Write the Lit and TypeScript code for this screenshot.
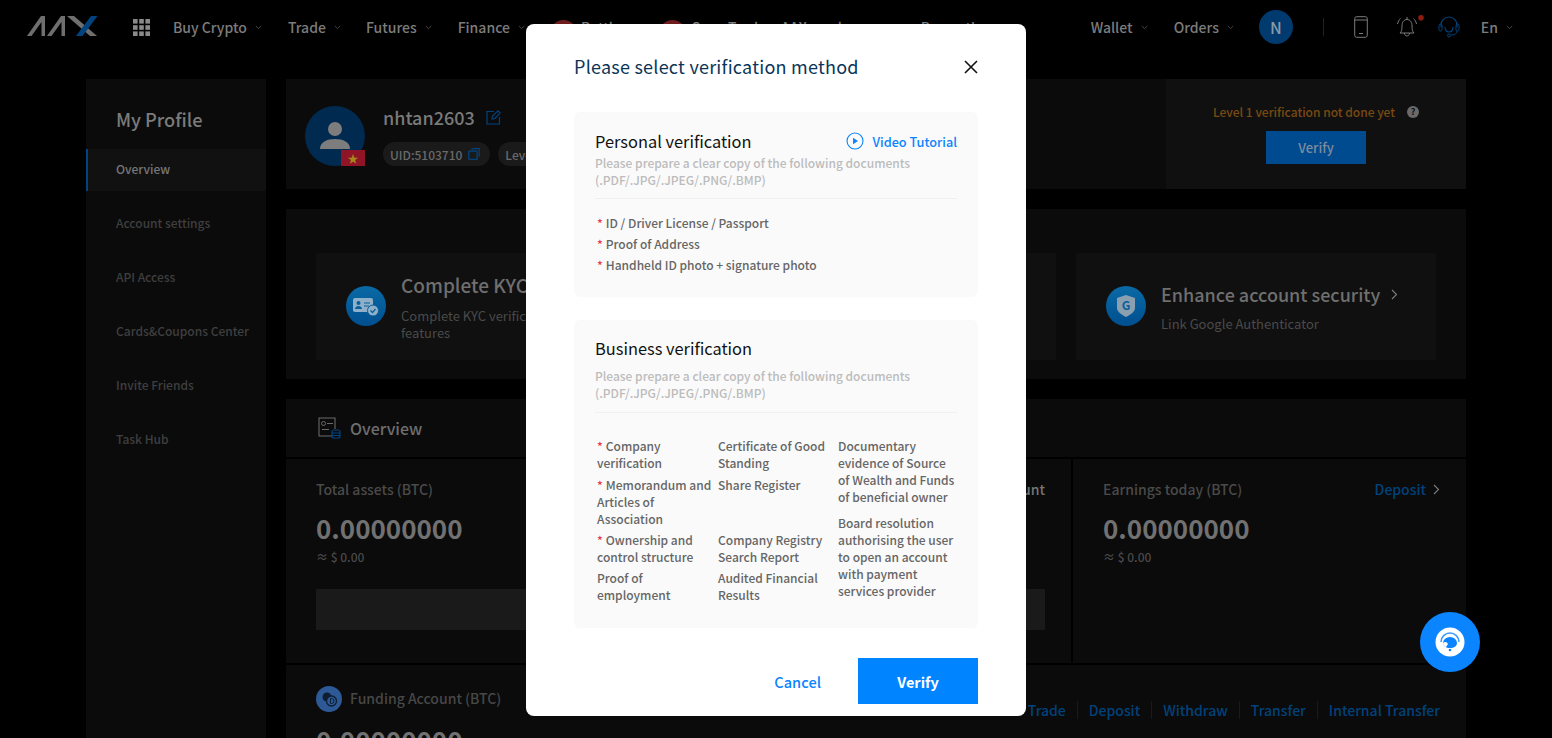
import { LitElement, html, css, svg } from "lit";
import { customElement } from "lit/decorators.js";

const chev = html`<svg class="chev" width="7" height="5" viewBox="0 0 7 5"><path d="M.8 1l2.7 2.6L6.2 1" fill="none" stroke="#444" stroke-width="1"/></svg>`;
const right = html`<svg class="right" width="7" height="11" viewBox="0 0 7 11"><path d="M1 1l4.500 4.500L1 10" fill="none" stroke="#7d7d7d" stroke-width="1.100"/></svg>`;
const grid = [0, 1, 2].flatMap((r) => [0, 1, 2].map((c) => svg`<rect x=${c * 6.2} y=${r * 6.2} width="4.6" height="4.6" fill="#8a8a8a"/>`));

@customElement("app-root")
export class AppRoot extends LitElement {
  static styles = css`
    :host { display: block; width: 1552px; height: 738px; overflow: hidden; position: relative; background: #000; font-family: "Noto Sans CJK SC", "Noto Sans", sans-serif; color: #7a7a7a; }
    svg { display: block; flex: none; }
    .head { height: 56px; display: flex; align-items: center; padding: 0 0 2px 26px; box-sizing: border-box; font-size: 14px; font-weight: 500; color: #7c7c7c; }
    .logo { margin: 0 35px 3px 0; }
    .gridi { margin-right: 23px; }
    .nav { display: flex; align-items: center; gap: 8px; margin-right: 26px; white-space: nowrap; flex: none; }
    .n-trade { margin-right: 25px; }
    .n-fin { margin-right: 26px; }
    .pill { width: 25px; height: 14px; border-radius: 12px 12px 0 0; background: #6e1c1c; margin-right: 5px; flex: none; }
    .n-battle { margin-right: 39px; }
    .n-copy { margin-left: 1px; margin-right: 15px; }
    .n-aax { margin-right: 50px; }
    .spacer { flex: 1; }
    .n-orders { margin-right: 0; }
    .n-en { margin-right: 39px; }
    .user { width: 34px; height: 34px; border-radius: 50%; background: #003a6e; color: #8a98a6; display: flex; align-items: center; justify-content: center; font-size: 16px; margin: 0 30px 0 25px; flex: none; }
    .vsep { width: 1px; height: 18px; background: #222; margin-right: 30px; flex: none; }
    .phone { margin-right: 26px; }
    .bell { margin-right: 14px; }
    .headset { margin-right: 21px; }
    .main { display: flex; gap: 20px; padding: 23px 86px 0; align-items: flex-start; }
    .side { width: 180px; height: 660px; background: #0b0b0b; flex: none; }
    .side h2 { margin: 0; padding: 25px 30px 15px; font-size: 18.200px; line-height: 30px; font-weight: 500; color: #7b7b7b; }
    .side .it { height: 42px; margin-bottom: 12px; padding: 0 0 4px 30px; box-sizing: border-box; display: flex; align-items: center; font-size: 12px; font-weight: 500; color: #3f3f3f; }
    .side .it.on { background: #111; color: #777; border-left: 2px solid #00437f; padding-left: 28px; }
    .content { flex: 1; display: flex; flex-direction: column; gap: 20px; min-width: 0; }
    .panel { background: #0b0b0b; }
    .prof { height: 110px; display: flex; }
    .who { flex: 1; display: flex; padding: 27px 0 0 19px; }
    .ava { width: 60px; height: 60px; border-radius: 50%; background: #002a50; position: relative; display: flex; align-items: center; justify-content: center; margin-right: 18px; }
    .flag { position: absolute; right: 0; bottom: 0; width: 24px; height: 16px; background: #8f1526; display: flex; align-items: center; justify-content: center; color: #a8871a; font-size: 11px; line-height: 16px; }
    .nm { font-size: 18px; line-height: 22px; font-weight: 500; color: #7a7a7a; display: flex; align-items: center; gap: 11px; }
    .tags { display: flex; gap: 8px; margin-top: 14px; }
    .tag { height: 24px; padding: 0 7px; border-radius: 12px; background: #1a1a1a; display: flex; align-items: center; gap: 6px; font-size: 12px; font-weight: 500; color: #6a6a6a; }
    .tag.uid { padding-right: 10px; }
    .lv { width: 300px; background: #101010; flex: none; display: flex; flex-direction: column; align-items: center; padding-top: 23px; box-sizing: border-box; }
    .warn { font-size: 12px; font-weight: 500; line-height: 20px; color: #7a4a12; display: flex; align-items: center; gap: 12px; height: 20px; }
    .q { width: 12px; height: 12px; border-radius: 50%; background: #6a6a6a; color: #111; font-size: 9px; font-weight: 700; line-height: 12px; text-align: center; }
    .btn { width: 100px; height: 33px; background: #004a8f; margin-top: 9px; display: flex; align-items: center; justify-content: center; font-size: 13px; font-weight: 500; color: #7d8d9d; }
    .tasks { height: 170px; padding: 44px 30px 19px; box-sizing: border-box; display: flex; gap: 20px; }
    .task { flex: 1 1 0; min-width: 0; background: #101010; display: flex; align-items: flex-start; padding: 0 30px; box-sizing: border-box; }
    .tic { width: 40px; height: 40px; border-radius: 50%; background: linear-gradient(#0a6aa6, #004f8f); margin: 33px 15px 0 0; display: flex; align-items: center; justify-content: center; flex: none; }
    .task h3 { margin: 0; font-size: 18px; line-height: 28px; font-weight: 500; color: #6f6f6f; white-space: nowrap; display: flex; align-items: center; gap: 11px; }
    .task p { margin: 0; font-size: 13px; line-height: 17px; color: #4a4a4a; }
    .t1 h3 { margin-top: 18px; font-size: 19px; } .t1 p { margin-top: 8px; }
    .t3 h3 { margin-top: 27px; } .t3 p { margin-top: 7px; }
    .ov { display: flex; flex-direction: column; gap: 2px; background: #000; }
    .ovh { height: 58px; background: #0b0b0b; display: flex; align-items: center; padding-left: 32px; gap: 9px; font-size: 16px; font-weight: 500; color: #6e6e6e; }
    .stats { height: 204px; display: flex; gap: 2px; }
    .st { background: #0b0b0b; padding: 18px 30px; box-sizing: border-box; position: relative; }
    .st.a { width: 785px; }
    .st.b { flex: 1; }
    .lbl { font-size: 14px; font-weight: 500; line-height: 24px; color: #4a4a4a; }
    .val { font-size: 26px; line-height: 34px; margin-top: 10px; font-weight: 700; color: #717171; }
    .apx { font-size: 12px; line-height: 18px; color: #4a4a4a; margin-top: 3px; font-weight: 500; }
    .bar { width: 729px; height: 41px; background: #1a1a1a; margin-top: 23px; }
    .acct { position: absolute; right: 26px; top: 18px; font-size: 14px; line-height: 24px; font-weight: 500; color: #757575; }
    .dep { position: absolute; right: 26px; top: 18px; display: flex; align-items: center; gap: 7px; font-size: 14px; font-weight: 500; line-height: 24px; color: #00427c; }
    .fund { height: 73px; background: #0b0b0b; padding: 23px 26px 0 30px; box-sizing: border-box; display: flex; align-items: flex-start; gap: 8px; font-size: 14px; font-weight: 500; color: #474747; position: relative; }
    .fund .ic { width: 26px; height: 26px; border-radius: 50%; background: #2d5a96; display: flex; align-items: center; justify-content: center; margin-top: -2px; }
    .links { margin: 10px 0 0 auto; display: flex; align-items: center; color: #00427c; font-weight: 500; height: 24px; }
    .links span { padding: 0 11px; border-left: 1px solid #1a1a1a; line-height: 18px; }
    .links span:first-child { border: 0; }
    .links span:last-child { padding-right: 0; }
    .fv { position: absolute; left: 30px; top: 58px; font-size: 26px; line-height: 34px; font-weight: 700; color: #717171; }
    .modal { position: absolute; left: 526px; top: 24px; width: 500px; height: 692px; background: #fff; border-radius: 8px; padding: 0 48px; box-sizing: border-box; display: flex; flex-direction: column; }
    .mh { height: 84px; margin-bottom: 4px; display: flex; align-items: center; justify-content: space-between; font-size: 18px; color: #0a3558; flex: none; }
    .mh span { letter-spacing: .24px; }
    .mh svg { margin-top: 2px; }
    .box { background: #fafafa; border-radius: 6px; padding: 0 21px; flex: none; }
    .box h4 { margin: 0; font-size: 16.400px; font-weight: 400; line-height: 24px; color: #111; }
    .b1 { height: 185px; padding-top: 17px; box-sizing: border-box; margin-bottom: 23px; }
    .b1 .hint { margin-top: 1px; }
    .b2 { height: 308px; padding-top: 16px; box-sizing: border-box; }
    .row1 { display: flex; justify-content: space-between; align-items: center; }
    .vt { display: flex; align-items: center; gap: 8px; color: #0a84ff; font-size: 12.700px; font-weight: 500; }
    .hint { font-size: 12px; font-weight: 500; line-height: 17px; color: #bcbcbc; padding-bottom: 10px; border-bottom: 1px solid #f0f0f0; }
    .b2 .hint { margin-top: 7px; padding-bottom: 11px; }
    .list { margin-top: 13px; padding-left: 2px; font-size: 12px; font-weight: 500; line-height: 21px; color: #666; }
    i { color: #e5394d; font-style: normal; margin-right: 3px; }
    .cols { display: grid; grid-template-columns: 121px 120px 1fr; margin: 24px 0 0 2px; font-size: 12px; font-weight: 500; line-height: 17px; color: #666; }
    .col { display: flex; flex-direction: column; }
    .mf { display: flex; justify-content: flex-end; align-items: center; margin-top: 30px; flex: none; }
    .cancel { color: #0a84ff; font-size: 14.600px; font-weight: 500; margin-right: 37px; }
    .ok { width: 120px; height: 46px; background: #0084ff; color: #fff; font-size: 14.500px; font-weight: 700; display: flex; align-items: center; justify-content: center; }
    .fab { position: absolute; left: 1420px; top: 612px; width: 60px; height: 60px; border-radius: 50%; background: #0a84ff; display: flex; align-items: center; justify-content: center; }
  `;

  render() {
    return html`
      <div class="head">
        <svg class="logo" width="72" height="20" viewBox="0 0 72 20">
          <path d="M1 20L15 0h4v20h-3.500V6L5.500 20z" fill="#6f6f6f"/>
          <path d="M21 20L35 0h4v20h-3.500V6L25.500 20z" fill="#6f6f6f"/>
          <path d="M41 0h7l23 20h-7z" fill="#6f6f6f"/>
          <path d="M71.500 0H65L50 20h6.500z" fill="#00437f"/>
        </svg>
        <svg class="gridi" width="17" height="17" viewBox="0 0 17 17">${grid}</svg>
        <div class="nav">Buy Crypto ${chev}</div>
        <div class="nav n-trade">Trade ${chev}</div>
        <div class="nav">Futures ${chev}</div>
        <div class="nav n-fin">Finance ${chev}</div>
        <div class="pill"></div><div class="nav n-battle">Battle</div>
        <div class="pill"></div><div class="nav n-copy">Copy Trade</div>
        <div class="nav n-aax">AAX academy</div>
        <div class="nav">Promotion</div>
        <div class="spacer"></div>
        <div class="nav">Wallet ${chev}</div>
        <div class="nav n-orders">Orders ${chev}</div>
        <div class="user">N</div>
        <div class="vsep"></div>
        <svg class="phone" width="14" height="22" viewBox="0 0 14 22"><rect x=".7" y=".7" width="12.600" height="20.600" rx="2" fill="none" stroke="#7a7a7a" stroke-width="1"/><path d="M.7 4h12.600M5 17.500h4" stroke="#7a7a7a" stroke-width="1"/></svg>
        <svg class="bell" width="30" height="24" viewBox="0 0 30 24"><path d="M6 18c1.500-1.500 2-3 2-7 0-4 2-6.500 5-6.500s5 2.500 5 6.500c0 4 .5 5.500 2 7zM10.500 18c0 4 5 4 5 0M3.500 9c.5-2.500 1.500-4 3-5.500M22.500 9c-.5-2.500-1.500-4-3-5.500M13 2v2.500" fill="none" stroke="#7a7a7a" stroke-width="1"/><circle cx="27" cy="2.800" r="2.800" fill="#8c1c10"/></svg>
        <svg class="headset" width="22" height="22" viewBox="0 0 22 22"><path d="M3 11V9a8 8 0 0 1 16 0v2M7 11c0 4 2 5 4 5s4-1 4-5" fill="none" stroke="#00437f" stroke-width="1.200"/><rect x="1" y="8" width="3" height="7" rx="1.500" fill="none" stroke="#00437f"/><rect x="18" y="8" width="3" height="7" rx="1.500" fill="none" stroke="#00437f"/><path d="M19 15c0 3-3 4-6 4" fill="none" stroke="#00437f"/><circle cx="11" cy="19.500" r="1.500" fill="none" stroke="#00437f"/></svg>
        <div class="nav n-en">En ${chev}</div>
      </div>
      <div class="main">
        <div class="side">
          <h2>My Profile</h2>
          <div class="it on">Overview</div>
          <div class="it">Account settings</div>
          <div class="it">API Access</div>
          <div class="it">Cards&amp;Coupons Center</div>
          <div class="it">Invite Friends</div>
          <div class="it">Task Hub</div>
        </div>
        <div class="content">
          <div class="panel prof">
            <div class="who">
              <div class="ava">
                <svg width="32" height="32" viewBox="0 0 32 32"><circle cx="16" cy="9" r="7" fill="#7d7d7d"/><path d="M1 29c0-7 7-10 15-10s15 3 15 10z" fill="#7d7d7d"/></svg>
                <div class="flag">★</div>
              </div>
              <div>
                <div class="nm">nhtan2603
                  <svg width="15" height="15" viewBox="0 0 15 15"><path d="M8 1.500H1v12.500h12.500V7M6 9l.5-3L12 .8l2.200 2.200L9 8.500z" fill="none" stroke="#00437f" stroke-width="1.200"/></svg>
                </div>
                <div class="tags">
                  <div class="tag uid">UID:5103710
                    <svg width="12" height="12" viewBox="0 0 12 12"><path d="M3.500.7h7.800v8" fill="none" stroke="#00437f" stroke-width="1.200"/><rect x=".8" y="3" width="8.400" height="8.400" rx="1" fill="none" stroke="#00437f" stroke-width="1.400"/></svg>
                  </div>
                  <div class="tag">Level 0</div>
                </div>
              </div>
            </div>
            <div class="lv">
              <div class="warn">Level 1 verification not done yet <span class="q">?</span></div>
              <div class="btn">Verify</div>
            </div>
          </div>
          <div class="panel tasks">
            <div class="task t1">
              <div class="tic">
                <svg width="28" height="22" viewBox="0 0 28 22"><rect x="1" y="3" width="20" height="14" rx="2" fill="#8fb0c8"/><circle cx="6.500" cy="8" r="2" fill="#0a5f9a"/><path d="M3 14c0-4 7-4 7 0z" fill="#0a5f9a"/><path d="M12 8h6M12 11h5" stroke="#0a5f9a"/><circle cx="21" cy="15.500" r="5.500" fill="#8fb0c8" stroke="#0a5f9a"/><path d="M18.500 15.500l2 2 3-3.500" fill="none" stroke="#0a5f9a" stroke-width="1.200"/></svg>
              </div>
              <div><h3>Complete KYC to unlock all</h3><p>Complete KYC verification to unlock all<br>features</p></div>
            </div>
            <div class="task"></div>
            <div class="task t3">
              <div class="tic">
                <svg width="18" height="22" viewBox="0 0 18 22"><path d="M9 0l9 3v10c0 4-5 7-9 9-4-2-9-5-9-9V3z" fill="#8aa0b0"/><text x="9" y="15" font-size="12" font-weight="700" fill="#0a5f9a" text-anchor="middle">G</text></svg>
              </div>
              <div><h3>Enhance account security ${right}</h3><p>Link Google Authenticator</p></div>
            </div>
          </div>
          <div class="ov">
            <div class="ovh">
              <svg width="23" height="22" viewBox="0 0 23 22"><path d="M14 19H1V1h16v11" fill="none" stroke="#6a6a6a" stroke-width="1.100"/><circle cx="5.500" cy="6.500" r="2" fill="none" stroke="#6a6a6a"/><path d="M9 6.500h6M4 12.500h7" stroke="#6a6a6a"/><rect x="14" y="13" width="8" height="8" rx="2" fill="none" stroke="#00437f" stroke-width="1.200"/><path d="M14 16h8M14 18.500h8" stroke="#00437f"/></svg>
              Overview
            </div>
            <div class="stats">
              <div class="st a">
                <div class="lbl">Total assets (BTC)</div>
                <div class="val">0.00000000</div>
                <div class="apx">≈ $ 0.00</div>
                <div class="bar"></div>
                <div class="acct">Account</div>
              </div>
              <div class="st b">
                <div class="lbl">Earnings today (BTC)</div>
                <div class="val">0.00000000</div>
                <div class="apx">≈ $ 0.00</div>
                <div class="dep">Deposit ${right}</div>
              </div>
            </div>
            <div class="fund">
              <div class="ic">
                <svg width="18" height="18" viewBox="0 0 18 18"><circle cx="7" cy="7" r="4.500" fill="#0e1e33"/><circle cx="11.500" cy="11" r="5" fill="#2d5a96" stroke="#0e1e33" stroke-width="1.300"/><path d="M10.500 8.500v5h1a2.500 2.500 0 0 0 0-5z" fill="none" stroke="#0e1e33"/></svg>
              </div>
              Funding Account (BTC)
              <div class="links"><span>Trade</span><span>Deposit</span><span>Withdraw</span><span>Transfer</span><span>Internal Transfer</span></div>
              <div class="fv">0.00000000</div>
            </div>
          </div>
        </div>
      </div>

      <div class="modal">
        <div class="mh"><span>Please select verification method</span>
          <svg width="14" height="14" viewBox="0 0 14 14"><path d="M1 1l12 12M13 1L1 13" stroke="#111" stroke-width="1.600"/></svg>
        </div>
        <div class="box b1">
          <div class="row1"><h4>Personal verification</h4>
            <div class="vt"><svg width="18" height="18" viewBox="0 0 18 18"><circle cx="9" cy="9" r="8" fill="none" stroke="#0a84ff" stroke-width="1.100"/><path d="M7 5.800l5 3.200-5 3.200z" fill="#0a84ff"/></svg>Video Tutorial</div>
          </div>
          <div class="hint">Please prepare a clear copy of the following documents<br>(.PDF/.JPG/.JPEG/.PNG/.BMP)</div>
          <div class="list">
            <div><i>*</i>ID / Driver License / Passport</div>
            <div><i>*</i>Proof of Address</div>
            <div><i>*</i>Handheld ID photo + signature photo</div>
          </div>
        </div>
        <div class="box b2">
          <h4>Business verification</h4>
          <div class="hint">Please prepare a clear copy of the following documents<br>(.PDF/.JPG/.JPEG/.PNG/.BMP)</div>
          <div class="cols">
            <div class="col">
              <div style="margin-bottom:5px"><i>*</i>Company<br>verification</div>
              <div style="margin-bottom:4px"><i>*</i>Memorandum and<br>Articles of<br>Association</div>
              <div style="margin-bottom:4px"><i>*</i>Ownership and<br>control structure</div>
              <div>Proof of<br>employment</div>
            </div>
            <div class="col">
              <div style="margin-bottom:5px">Certificate of Good<br>Standing</div>
              <div style="margin-bottom:38px">Share Register</div>
              <div style="margin-bottom:4px">Company Registry<br>Search Report</div>
              <div>Audited Financial<br>Results</div>
            </div>
            <div class="col">
              <div style="margin-bottom:9px">Documentary<br>evidence of Source<br>of Wealth and Funds<br>of beneficial owner</div>
              <div>Board resolution<br>authorising the user<br>to open an account<br>with payment<br>services provider</div>
            </div>
          </div>
        </div>
        <div class="mf"><div class="cancel">Cancel</div><div class="ok">Verify</div></div>
      </div>

      <div class="fab">
        <svg width="30" height="30" viewBox="0 0 30 30"><circle cx="15" cy="15" r="14.500" fill="#fff"/><path d="M6 15a9 9 0 0 1 18 0" fill="none" stroke="#3a9bff" stroke-width="1.500"/><path d="M8 16a7 6 0 0 1 14 0c0 3-3 5-7 5s-7-2-7-5z" fill="#0a84ff"/><path d="M8 16c2-2 4-1 5 1l-2 3c-2 0-3-2-3-4z" fill="#fff"/><circle cx="15" cy="23" r="1.300" fill="#0a84ff"/></svg>
      </div>
    `;
  }
}
